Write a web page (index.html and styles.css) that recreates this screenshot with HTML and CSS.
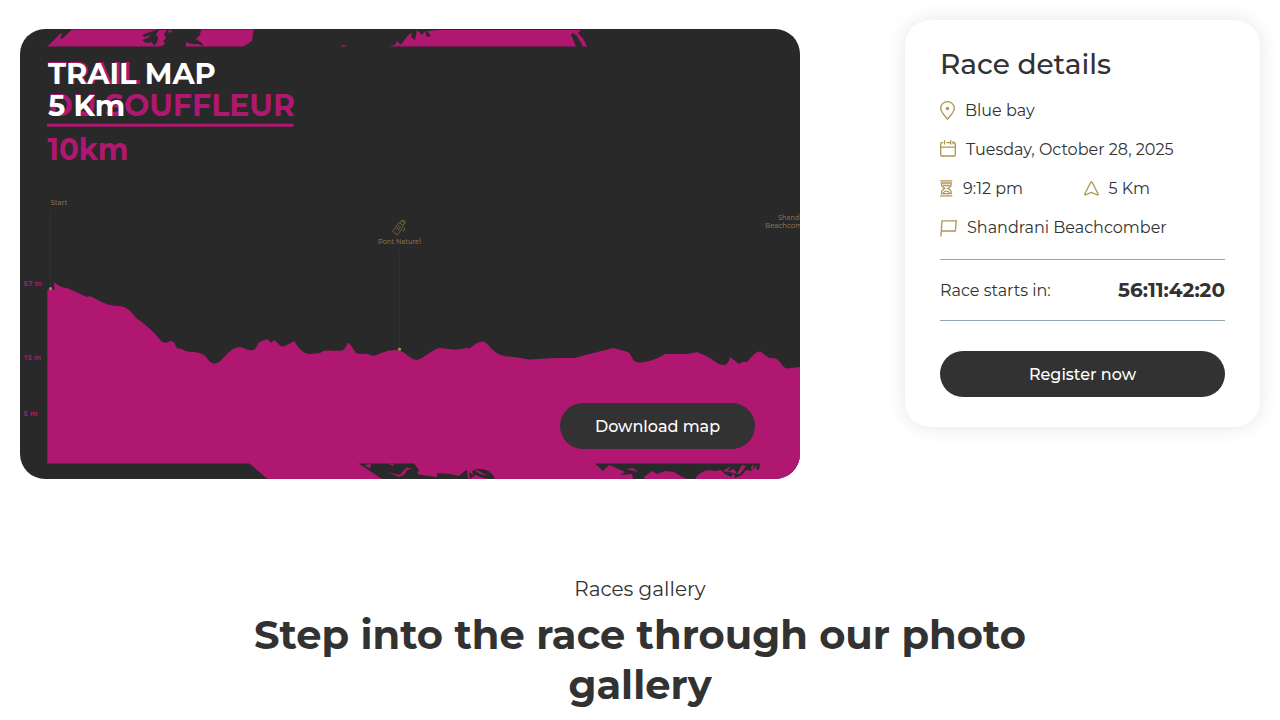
FILE: index.html
```html
<!DOCTYPE html>
<html lang="en">
<head>
<meta charset="utf-8">
<title>Trail map</title>
<link rel="stylesheet" href="styles.css">
</head>
<body>
<main class="page">
  <div class="race">
    <section class="map">
      <svg class="map-art" viewBox="20 29 780 450" aria-hidden="true">
        <g class="pink">
          <path d="M47 46.500C52 42 55 39 58 36Q61 32 62 34L60 39Q64 38 66 35L72 29.500H158L150 32L142 35L144 37L148 36L151 34L148 38L142 40L146 43L152 42L154 46.500H47Z"/>
          <path d="M159 30H167L164 34Q168 38 163 41Q166 43 164 45L160 46.500H153Q159 42 158 37Q154 35 159 30ZM168 30L173 31L169 33Z"/>
          <path d="M201 29.500H253.500L252 41L243 46.500H186V42Q192 45 198 44L203 46L202 43L196 39L200 35Z"/>
          <path d="M340 46.500Q344 43.500 347 46.500ZM389 46.500L395 45L397 41L401 45L397 46.500Z"/>
          <path d="M399 46.500L404 41Q408 34 412 33L411 37L415 40L417 30L422 35L425 31L427 37L431 36L427 31L438 30H581L578 33L584 40L587 46.500H583L577 36L573 33Q570 34 572 37L576 46.500Z"/>
          <path d="M47.300 463.500V289.500H54.300V282C58 286 62 287.500 67 288L87 297Q90 295 94 298Q107 306 118 306C128 306 132 313 136 318Q150 327 162 342Q167 344 170 341C176 340 174 348 179 348.500C184 349 184 352 193 352C210 353 206 363.500 215 363.500C222 363.500 227 349 239 347C244 347 246 351 253 350C258 348 256 344 260 342L267 339L271.500 343L274 340C281 346 281 348 287 345L294.500 341C299 350 304 354 311 354L320 353Q323 350 327 350.500C337 350.500 344 352 345 348L348 342.500L350 344L356 353C361 355 365 352 373 356C382 353 387 350 396 350C407 351 409 360 417 360C425 358 434 348 440 348L448 349C455 350 463 349 465 348L470 348.500C474 345 478 341 484 341.500C490 346 494 353 501 355Q507 357 514 357L529 359.500L556 358H574L613 348L628 352C634 357 631 362 639 362.500C650 362 659 358 665 354H688L697 352L706 356C714 360 717 365 725 365Q729 363 730 357L739 364Q743 361 747 362Q757 349 761 352L769 358C780 357 780 364 786 368.500L800 367V479H267.500L249.500 463.500Z"/>
        </g>
        <g class="dark">
          <path d="M358.500 463.500H414L419 470L417 474L422 475L437 477V473L450 474L459 476Q464 471 467 470L468 479H382ZM470 479L469 472L473 475L472 471L475 470L480 474L488 476L475 469Q490 467 495 479H489L480 477L476 475Z"/>
          <path d="M595 463.500H760L759 470L756 469L757 465L751 471L746 470L742 475L735 478L734 473L731 477L725 474L721 470L715 471Q702 468 695 479H687L682 477L674 472L665 471L657 474L652 471L644 477L645 479H633L632 474L620 475L625 472L614 467L609 465L603 471Z"/>
        </g>
        <path class="pink" d="M365 465L371 464L370 468L367 467ZM388 463.500H394L393 466ZM387 472L400 475L406 468L412 468Q405 470 405 474L399 477L392 474ZM723 471L731 466L727 472L734 469L737 474L742 465L746 466L740 474ZM626 469L633 468L638 472ZM751 467L754 464L752 471Z"/>
        <rect class="pink" x="47" y="123.700" width="246.500" height="3"/>
        <g class="pink poster">
          <text x="48" y="84.200" textLength="92" lengthAdjust="spacingAndGlyphs">TRAIL</text>
          <text x="48" y="116" textLength="247" lengthAdjust="spacingAndGlyphs">DU SOUFFLEUR</text>
          <text x="47.500" y="160" textLength="81" lengthAdjust="spacingAndGlyphs">10km</text>
        </g>
        <g class="pink height">
          <text x="23.500" y="285.700" textLength="18.500" lengthAdjust="spacingAndGlyphs">57 m</text>
          <text x="23.500" y="359.700" textLength="17.500" lengthAdjust="spacingAndGlyphs">15 m</text>
          <text x="23.500" y="416.300" textLength="14" lengthAdjust="spacingAndGlyphs">5 m</text>
        </g>
        <g class="place">
          <text x="50.500" y="204.800" textLength="17" lengthAdjust="spacingAndGlyphs">Start</text>
          <text x="378" y="244" textLength="43" lengthAdjust="spacingAndGlyphs">Pont Naturel</text>
          <text x="778" y="220" textLength="34" lengthAdjust="spacingAndGlyphs">Shandrani</text>
          <text x="765" y="228" textLength="49" lengthAdjust="spacingAndGlyphs">Beachcomber</text>
        </g>
        <path class="guide" d="M50.500 210V287M399.500 251V347"/>
        <g class="dot"><circle cx="50.500" cy="288.700" r="1.600"/><circle cx="399.500" cy="349.200" r="1.600"/></g>
        <g class="bottle" transform="translate(399 227.500) rotate(35)"><rect x="-3" y="-4" width="6" height="11" rx="1"/><path d="M-2-4V-7H2V-4M-1-7V-8.500H2V-7M-1-2V3M1-2V3M5-3Q7-1 5 1"/></g>
      </svg>
      <h2 class="map-title">TRAIL MAP<br>5 Km</h2>
      <a class="button download">Download map</a>
    </section>

    <aside class="card">
      <h3 class="card-title">Race details</h3>
      <ul class="facts">
        <li class="fact"><svg width="15" height="19" viewBox="0 0 15 19"><path d="M7.500 18.200C5.500 15.500.7 11.300.7 7.300a6.800 6.600 0 0 1 13.600 0C14.300 11.300 9.500 15.500 7.500 18.200Z"/><circle class="fill" cx="7.500" cy="7.500" r="1.700"/></svg><span>Blue bay</span></li>
        <li class="fact"><svg class="calendar" width="16" height="17" viewBox="0 0 16 17"><path d="M3 2.700H1.700Q.7 2.700.7 3.700V15Q.7 16 1.700 16H14.300Q15.300 16 15.300 15V3.700Q15.300 2.700 14.300 2.700H13M.7 7.200H15.300M4.500.3V4.500M10.700.3V4.500M6.500 2.700H10.700M13 1.200V4.200"/></svg><span>Tuesday, October 28, 2025</span></li>
        <li class="fact-pair">
          <div class="fact"><svg width="13" height="17" viewBox="0 0 13 17"><path d="M.3.900H12.300M.3 15.800H12.300M1.500 3H11.200V4.500Q11 7 8 8.300Q11 9.800 11.200 12V13.600H1.500V12Q1.700 9.800 4.700 8.300Q1.700 7 1.500 4.500ZM3 5.500H9.700M3.200 12.800Q6.300 9.500 9.500 12.800"/></svg><span>9:12 pm</span></div>
          <div class="fact"><svg width="15" height="15" viewBox="0 0 15 15"><path d="M7.300 1Q6.800 1 5.800 3L.8 13Q.5 14 1.500 13.800L7.400 11.500L13.300 13.800Q14.500 14 14.100 13L9 3Q8 1 7.300 1Z"/></svg><span>5 Km</span></div>
        </li>
        <li class="fact"><svg class="flag" width="17" height="17" viewBox="0 0 17 17"><path d="M.9 16.500L2 .8H16.300L15.300 11H1.300"/></svg><span>Shandrani Beachcomber</span></li>
      </ul>
      <div class="countdown"><span>Race starts in:</span><strong class="clock">56:11:42:20</strong></div>
      <a class="button register">Register now</a>
    </aside>
  </div>

  <section class="gallery">
    <p class="eyebrow">Races gallery</p>
    <h1 class="headline">Step into the race through our photo gallery</h1>
  </section>
</main>
</body>
</html>
```
FILE: styles.css
```css
* { box-sizing: border-box; }
body { margin: 0; height: 720px; overflow: hidden; background: #fff; color: #323232; font-family: Montserrat, Inter, "Open Sans", sans-serif; font-size: 16px; }
h1, h2, h3, p, ul { margin: 0; padding: 0; }
ul { list-style: none; }
span, a, strong { white-space: nowrap; }
.race { display: flex; justify-content: space-between; align-items: flex-start; padding: 20px 20px 0; }
.map { position: relative; width: 780px; height: 450px; margin-top: 9px; border-radius: 25px; overflow: hidden; background: #292929; }
.map-art { display: block; width: 780px; height: 450px; }
.pink { fill: #b01770; }
.dark { fill: #292929; }
.poster { font-size: 30px; font-weight: 700; }
.height { font-family: "Open Sans", sans-serif; font-size: 6.500px; font-weight: 700; }
.place { font-size: 7px; font-weight: 500; fill: #83714a; }
.guide { stroke: #303030; stroke-width: 1; fill: none; }
.dot { fill: #a18b4e; }
.bottle { fill: none; stroke: #7d6b3f; stroke-width: .8; }
.map-title { position: absolute; left: 28px; top: 29px; color: #fff; font-size: 29px; line-height: 32px; font-weight: 700; }
.button { display: flex; align-items: center; justify-content: center; height: 46px; border-radius: 23px; background: #323232; color: #fff; font-size: 16px; font-weight: 500; }
.download { position: absolute; right: 45px; bottom: 30px; width: 195px; }
.card { width: 355px; height: 407px; padding: 24px 35px 0; border-radius: 25px; background: #fff; box-shadow: 0 0 20px rgba(0, 0, 0, .1); }
.card-title { font-size: 28px; line-height: 40px; font-weight: 500; }
.facts { display: grid; grid-auto-rows: 39px; margin-top: 7px; }
.fact { display: flex; align-items: center; gap: 10px; height: 39px; }
.fact svg { flex: none; fill: none; stroke: #ad9650; stroke-width: 1.300; }
.fact .calendar { margin-bottom: 2px; }
.fact .flag { margin-top: 2px; }
.fact .fill { fill: #ad9650; stroke: none; }
.fact-pair { display: grid; grid-template-columns: 1fr 1fr; column-gap: 2px; }
.countdown { display: flex; justify-content: space-between; align-items: center; height: 62px; margin-top: 12px; border-top: 1px solid #94a5b0; border-bottom: 1px solid #94a5b0; }
.clock { font-size: 20px; font-weight: 700; }
.register { margin-top: 30px; }
.gallery { padding-top: 95px; text-align: center; }
.eyebrow { font-size: 20px; line-height: 30px; }
.headline { width: 800px; margin: 6px auto 0; font-size: 40px; line-height: 50px; font-weight: 700; }
```
